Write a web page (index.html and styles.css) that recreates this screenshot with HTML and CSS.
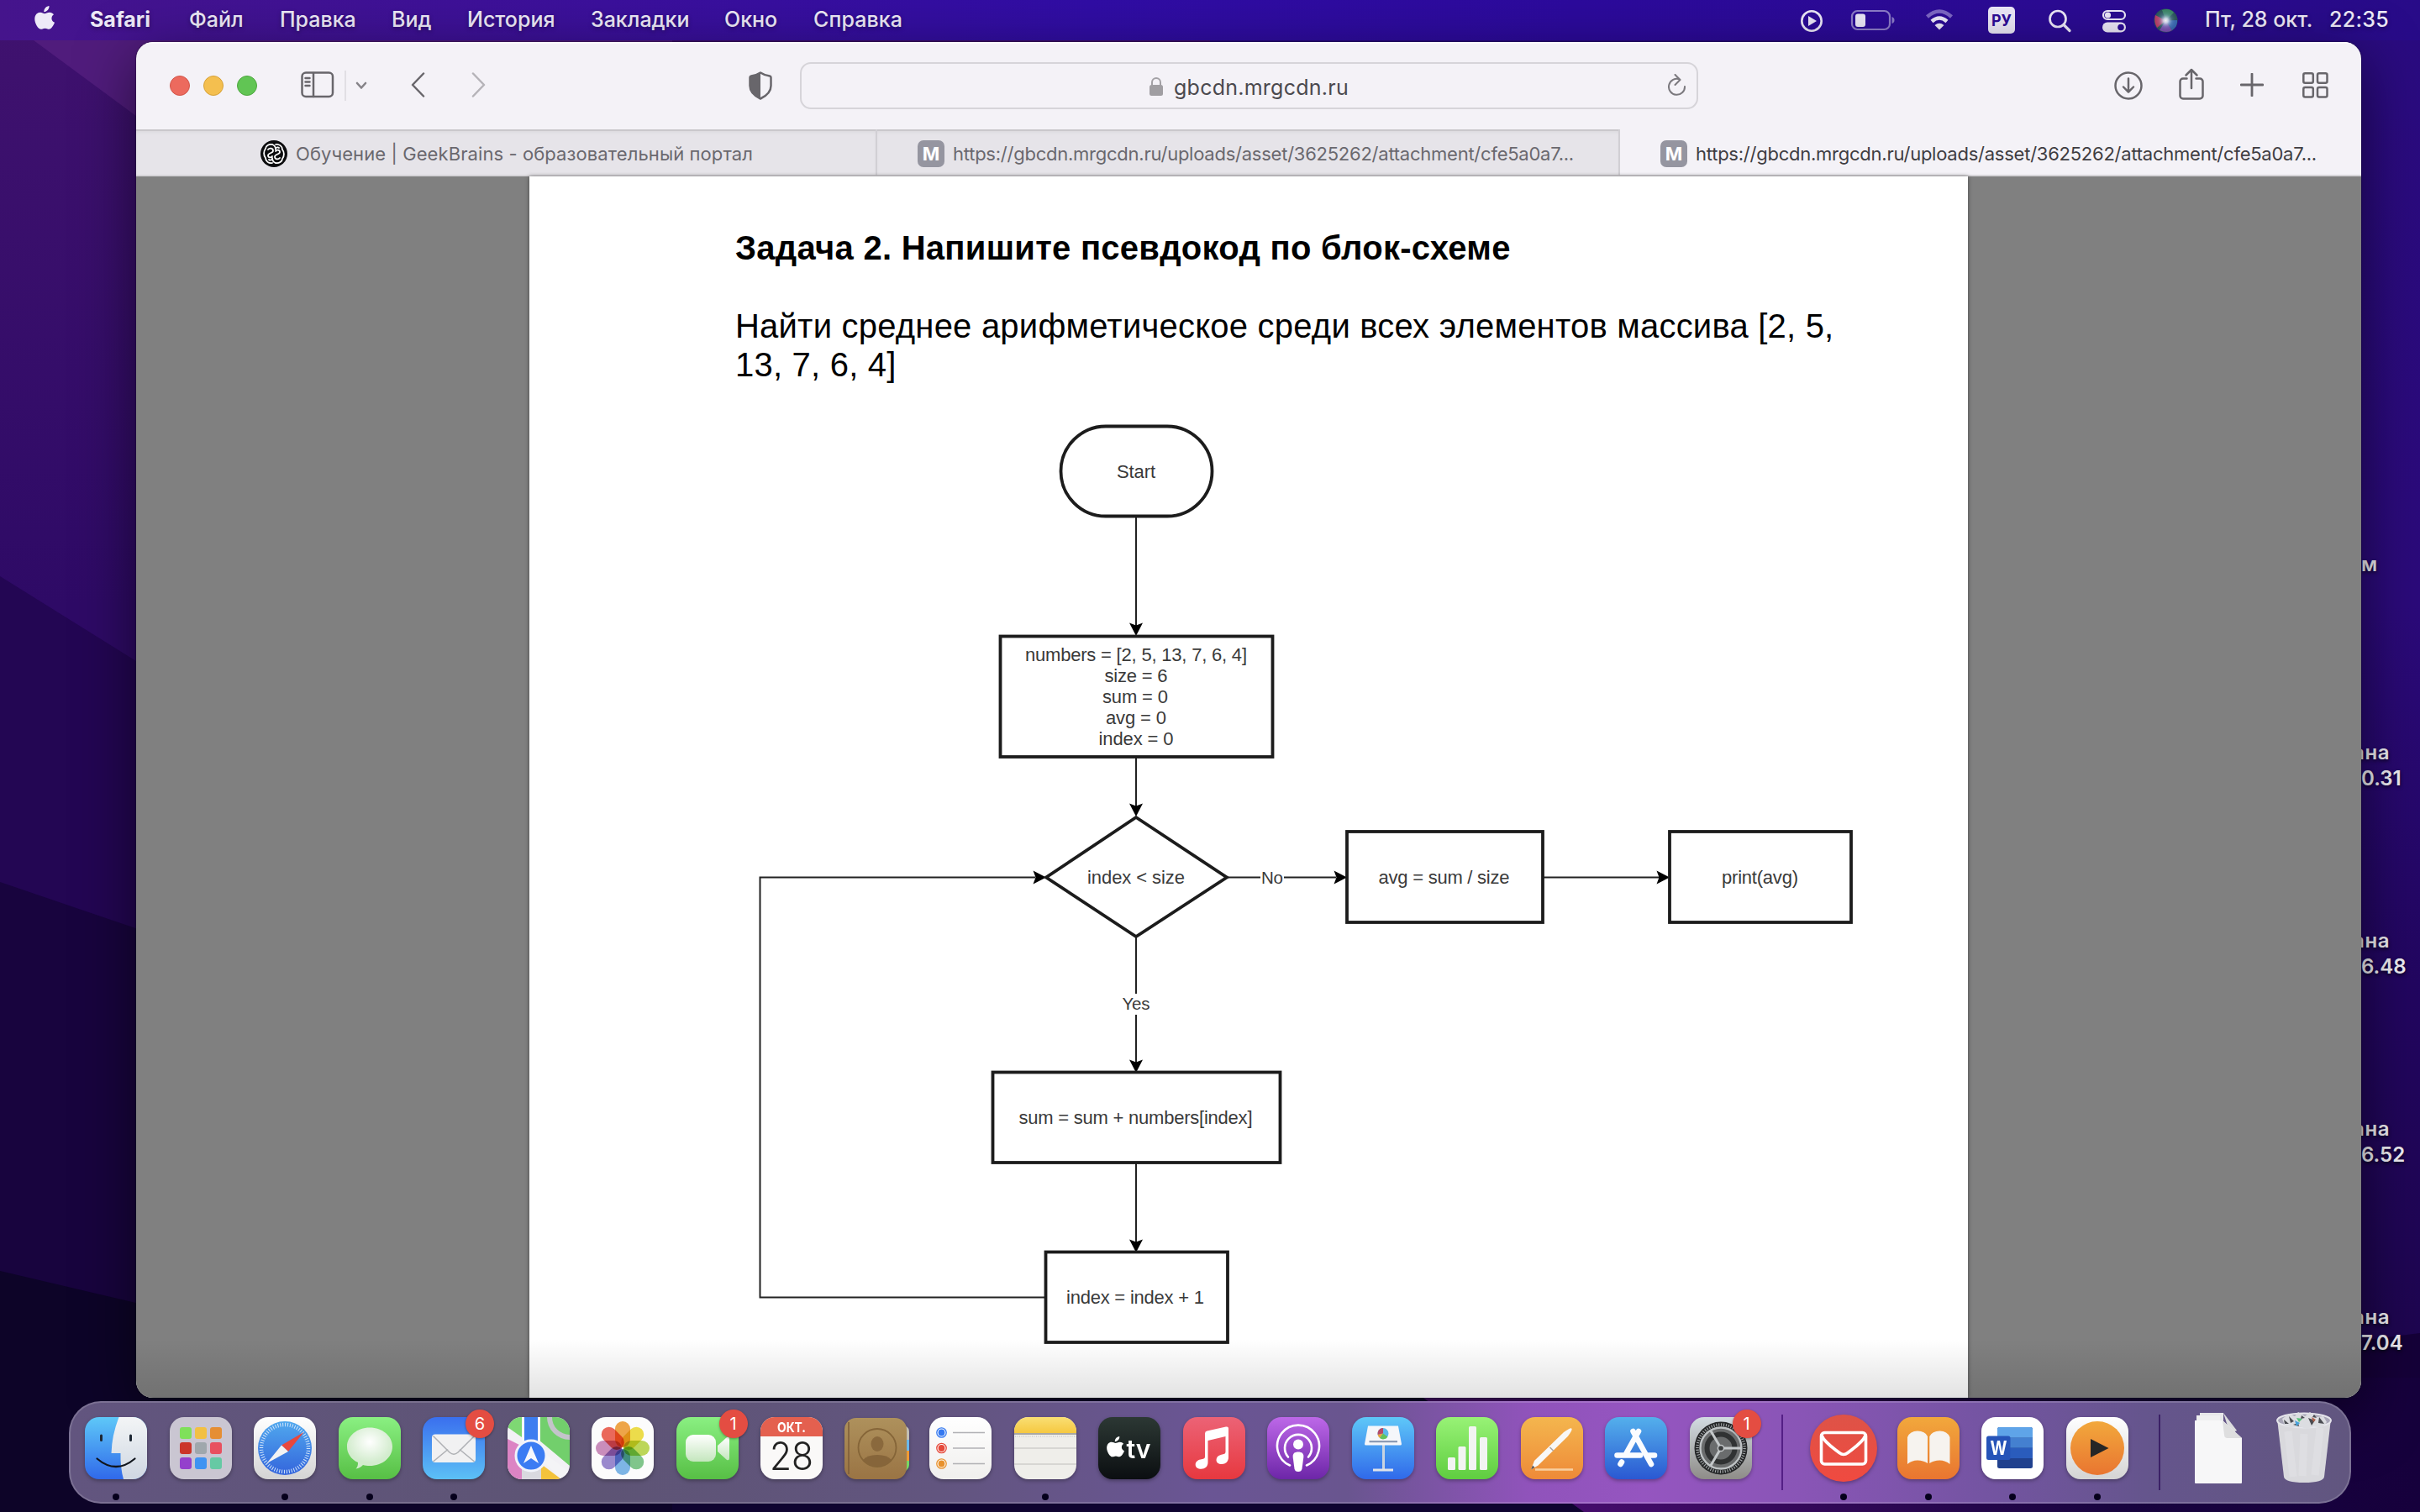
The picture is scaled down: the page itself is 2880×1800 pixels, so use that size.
FILE: index.html
```html
<!DOCTYPE html>
<html lang="ru">
<head>
<meta charset="utf-8">
<title>gbcdn.mrgcdn.ru</title>
<link rel="stylesheet" href="styles.css">
</head>
<body>
<svg class="wallpaper" viewBox="0 0 2880 1800" preserveAspectRatio="none" aria-hidden="true">
  <defs>
    <linearGradient id="wl" x1="0" y1="0" x2="0" y2="1"><stop offset="0" stop-color="#40126f"/><stop offset=".4" stop-color="#2e0a66"/></linearGradient>
    <linearGradient id="wr" x1="0" y1="0" x2="0" y2="1"><stop offset="0" stop-color="#2a0b80"/><stop offset=".4" stop-color="#2b0a7a"/><stop offset=".65" stop-color="#220660"/><stop offset=".88" stop-color="#1e0650"/></linearGradient>
    <linearGradient id="wb" x1="0" y1="0" x2="1" y2="0"><stop offset="0" stop-color="#521079"/><stop offset=".3" stop-color="#3c0a62"/><stop offset=".7" stop-color="#18043f"/><stop offset="1" stop-color="#16003c"/></linearGradient>
  </defs>
  <rect width="1440" height="1800" fill="url(#wl)"/>
  <rect x="1440" width="1440" height="1800" fill="url(#wr)"/>
  <path d="M0 0L40 48L170 144L800 600V0z" fill="#501c7c"/>
  <path d="M0 686L170 792L700 1100V1800H0z" fill="#230653"/>
  <path d="M0 1050L170 1108L900 1300V1800H0z" fill="#18043e"/>
  <path d="M0 1513L170 1553L1440 1700V1800H0z" fill="#0d0428"/>
  <path d="M800 1640H2880V1800H800z" fill="#0f0430"/>
  <path d="M2700 1610L2880 1587V1800H2700z" fill="#150038"/>
  <path d="M1660 1640L1885 1800H2880V1640z" fill="url(#wb)"/>
</svg>

<header class="menubar">
  <svg class="apple" viewBox="0 0 27 32"><path d="M18.500 1c.2 2-.6 3.800-1.700 5.100-1.200 1.300-2.900 2.200-4.500 2.100-.2-1.900.7-3.800 1.800-5C15.300 1.900 17.100 1.100 18.500 1zM24 11.200c-3.800 2.300-3.200 8 1 9.600-1 2.900-3.800 8-6.700 8-1.900 0-2.500-1.100-4.700-1.100s-2.900 1.100-4.600 1.100C5.500 28.900 1.300 21.900 1.300 16.700c0-5 3.200-7.900 6.500-7.900 2.200 0 4 1.400 5.300 1.400 1.200 0 3.400-1.500 6-1.500 1.900 0 3.700.9 4.900 2.500z"/></svg>
  <nav class="menus">
    <span class="m1">Safari</span><span class="m2">Файл</span><span class="m3">Правка</span><span class="m4">Вид</span><span class="m5">История</span><span class="m6">Закладки</span><span class="m7">Окно</span><span class="m8">Справка</span>
  </nav>
  <svg class="status" viewBox="2140 0 460 48">
    <circle cx="2156" cy="25" r="11.700" fill="none" stroke="#ece8f8" stroke-width="2.600"/><path d="M2152 19l10 6-10 6z" fill="#ece8f8"/>
    <rect x="2204" y="13" width="45" height="22" rx="6.500" fill="none" stroke="#8c7cc8" stroke-width="2.200"/><rect x="2208" y="16.500" width="12" height="15.500" rx="3" fill="#ece8f8"/><path d="M2251.500 20v8q3-1 3-4t-3-4z" fill="#8c7cc8"/>
    <path d="M2293.500 20q14.500-13 29 0" fill="none" stroke="#7d67c4" stroke-width="4.500"/><path d="M2299 25.500q9-8 18 0" fill="none" stroke="#ece8f8" stroke-width="4.500"/><path d="M2302.500 30q5.500-4.500 11 0l-5.500 5.500z" fill="#ece8f8"/>
    <rect x="2366" y="8" width="32" height="32" rx="5" fill="#ece8f8"/><text x="2382" y="31" class="lang" text-anchor="middle" textLength="24" lengthAdjust="spacingAndGlyphs">РУ</text>
    <circle cx="2449" cy="22.500" r="9.500" fill="none" stroke="#ece8f8" stroke-width="2.700"/><path d="M2456 29.500l7 7" stroke="#ece8f8" stroke-width="3.200" stroke-linecap="round"/>
    <rect x="2503" y="13" width="26" height="10" rx="5" fill="none" stroke="#ece8f8" stroke-width="2.200"/><circle cx="2508.500" cy="18" r="3.600" fill="#ece8f8"/><rect x="2502" y="26.500" width="28" height="12" rx="6" fill="#ece8f8"/><circle cx="2524" cy="32.500" r="3.800" fill="#2c0b96"/>
    <defs><radialGradient id="siri"><stop offset="0" stop-color="#fff"/><stop offset=".2" stop-color="#dfe6fa" stop-opacity=".9"/><stop offset=".55" stop-color="#7a9cc0" stop-opacity=".35"/><stop offset="1" stop-color="#22344f" stop-opacity=".1"/></radialGradient></defs>
    <circle cx="2577.500" cy="24.500" r="14" fill="#2c5a5c"/><path d="M2577.500 24.500L2565 18q-2 8 2 15z" fill="#d93a68"/><path d="M2577.500 24.500L2570 36q9 4 15 0z" fill="#8a4fc0"/><path d="M2577.500 24.500L2585 36q7-5 6-12z" fill="#3a6fc4"/><path d="M2577.500 24.500L2573 12q9-3 14 3z" fill="#3f9468"/><circle cx="2577.500" cy="24.500" r="14" fill="url(#siri)"/>
  </svg>
  <span class="date">Пт, 28 окт.</span><span class="time">22:35</span>
</header>

<aside class="desktop-labels">
  <p class="lbl first"><span>м</span></p>
  <p class="lbl"><span class="cut">ана</span><span>0.31</span></p>
  <p class="lbl"><span class="cut">ана</span><span>6.48</span></p>
  <p class="lbl"><span class="cut">ана</span><span>6.52</span></p>
  <p class="lbl"><span class="cut">ана</span><span>7.04</span></p>
</aside>

<main class="window">
  <div class="toolbar">
    <div class="lights"><i class="red"></i><i class="yellow"></i><i class="green"></i></div>
    <svg class="ic sidebar" viewBox="0 0 40 32"><rect x="1.500" y="1.500" width="36.500" height="28.500" rx="4.500"/><path d="M15 2v28M5.500 8h5M5.500 12.500h5M5.500 17h5"/></svg>
    <i class="vsep"></i>
    <svg class="ic chev" viewBox="0 0 14 10"><path d="M2 2l5 5.500L12 2" stroke-width="2.600"/></svg>
    <svg class="ic back" viewBox="0 0 17 30"><path d="M15 1.500L2 15l13 13.500"/></svg>
    <svg class="ic fwd" viewBox="0 0 17 30"><path d="M2 1.500L15 15 2 28.500"/></svg>
    <svg class="ic shield" viewBox="0 0 28 34"><path d="M14 1.500C17 3.500 21 5 25 5.500c1 .2 1.500.8 1.500 1.700V17c0 7-5 12-12.500 15.500C6.500 29 1.500 24 1.500 17V7.200c0-.9.500-1.500 1.500-1.700C7 5 11 3.500 14 1.500z"/><path d="M14 1.500C11 3.500 7 5 3 5.500c-1 .2-1.500.8-1.500 1.700V17c0 7 5 12 12.500 15.500z" class="solid"/></svg>
    <div class="url">
      <svg class="lock" viewBox="0 0 16 24"><path d="M3 11V7a5 5 0 0 1 10 0v4" fill="none" stroke="#a3a1a5" stroke-width="2"/><rect y="10" width="16" height="13" rx="2.500" fill="#a09ea2"/></svg>
      <span>gbcdn.mrgcdn.ru</span>
      <svg class="ic reload" viewBox="0 0 22 28"><path d="M20 15a9.500 9.500 0 1 1-6-8.500M8.500 1l6 6-6 6" stroke-width="2"/></svg>
    </div>
    <svg class="ic download" viewBox="0 0 34 34"><circle cx="17" cy="17" r="15.500"/><path d="M17 8.500v16M11 18.500l6 6.200 6-6.200"/></svg>
    <svg class="ic share" viewBox="0 0 30 38"><path d="M9.500 12.500H5a3.500 3.500 0 0 0-3.500 3.500v17A3.500 3.500 0 0 0 5 36.500h20a3.500 3.500 0 0 0 3.500-3.500V16a3.500 3.500 0 0 0-3.500-3.500h-4.500M15 24V2M8.500 8.500L15 2l6.500 6.500"/></svg>
    <svg class="ic plus" viewBox="0 0 28 28"><path d="M14 1v26M1 14h26" stroke-width="2.800"/></svg>
    <svg class="ic grid" viewBox="0 0 31 31"><rect x="1.300" y="1.300" width="11.500" height="11.500" rx="2"/><rect x="18" y="1.300" width="11.500" height="11.500" rx="2"/><rect x="1.300" y="18" width="11.500" height="11.500" rx="2"/><rect x="18" y="18" width="11.500" height="11.500" rx="2"/></svg>
  </div>
  <div class="tabs">
    <div class="tab t1"><svg class="gb" viewBox="0 0 32 32"><circle cx="16" cy="16" r="16" fill="#0c0c0e"/><g fill="none" stroke="#fff" stroke-width="1.800" stroke-linecap="round" stroke-linejoin="round"><path d="M14 5C10 4 6 7 6 10c-2.500 3-2.500 8 0 11 0 4 4 7 8 6M18 27c4 1 8-2 8-5 2.500-3 2.500-8 0-11 0-4-4-7-8-6"/><path d="M9 11c2-2.500 6-1.500 6 1.500S9 15 9 18s4 3 5 1M23 21c-2 2.500-6 1.500-6-1.500s6-2.500 6-5.500-4-3-5-1"/><path d="M14 5c3 1 4 3 4 6M18 27c-3-1-4-3-4-6M10 23c1 1 3 1 4-1M22 9c-1-1-3-1-4 1"/></g></svg><span>Обучение | GeekBrains - образовательный портал</span></div>
    <div class="tab t2"><b>M</b><span>https://gbcdn.mrgcdn.ru/uploads/asset/3625262/attachment/cfe5a0a7...</span></div>
    <div class="tab t3"><b>M</b><span>https://gbcdn.mrgcdn.ru/uploads/asset/3625262/attachment/cfe5a0a7...</span></div>
  </div>
  <div class="viewer">
    <article class="page">
      <h1>Задача 2. Напишите псевдокод по блок-схеме</h1>
      <p>Найти среднее арифметическое среди всех элементов массива [2, 5,<br>13, 7, 6, 4]</p>
      <svg class="flow" viewBox="630 480 1712 1184">
        <defs>
          <path id="head" d="M0 0l-8-15.500L0-12.500l8-3z"/>
        </defs>
        <g class="edge">
          <path d="M1352 614V745M1352 901V960M1352 1116V1183M1352 1208V1265M1352 1384V1479M1460 1044.500H1500M1528 1044.500H1590M1836 1044.500H1975M1244 1544.500H904.500V1044.500H1232"/>
        </g>
        <g class="arrow">
          <use href="#head" x="1352" y="757"/><use href="#head" x="1352" y="972"/><use href="#head" x="1352" y="1277"/><use href="#head" x="1352" y="1491"/>
          <use href="#head" transform="translate(1245 1044.500) rotate(-90)"/><use href="#head" transform="translate(1603 1044.500) rotate(-90)"/><use href="#head" transform="translate(1987 1044.500) rotate(-90)"/>
        </g>
        <g class="node">
          <rect x="1262.500" y="507.500" width="180" height="107" rx="53.500"/>
          <rect x="1190.500" y="757.500" width="324" height="143.500"/>
          <path d="M1352 973L1460 1044.500L1352 1115L1245 1044.500z"/>
          <rect x="1603" y="990" width="233" height="108"/>
          <rect x="1987" y="990" width="216" height="108"/>
          <rect x="1181.500" y="1276.500" width="342" height="107.500"/>
          <rect x="1244.500" y="1490.500" width="216.500" height="107.500"/>
        </g>
        <g class="label" transform="translate(0 -1)">
          <text x="1352" y="569.500" textLength="46">Start</text>
          <text x="1352" y="787.500" textLength="264">numbers = [2, 5, 13, 7, 6, 4]</text>
          <text x="1352" y="812.500" textLength="75">size = 6</text>
          <text x="1351" y="837.500" textLength="78">sum = 0</text>
          <text x="1352" y="862.500" textLength="72">avg = 0</text>
          <text x="1352" y="887.500" textLength="89">index = 0</text>
          <text x="1352" y="1052.500" textLength="116">index &lt; size</text>
          <text x="1514" y="1053" textLength="26" class="small">No</text>
          <text x="1718.500" y="1052.500" textLength="156">avg = sum / size</text>
          <text x="2094.500" y="1052.500" textLength="91">print(avg)</text>
          <text x="1352" y="1203" textLength="33" class="small">Yes</text>
          <text x="1351.500" y="1338.500" textLength="278">sum = sum + numbers[index]</text>
          <text x="1351" y="1553" textLength="164">index = index + 1</text>
        </g>
      </svg>
    </article>
  </div>
</main>

<footer class="dock">
  <svg width="0" height="0" class="defs"><defs>
    <linearGradient id="blue" x2="0" y2="1"><stop stop-color="#5ec8f8"/><stop offset="1" stop-color="#3069ea"/></linearGradient>
    <linearGradient id="mailg" x2="0" y2="1"><stop stop-color="#3a6fee"/><stop offset="1" stop-color="#5cc0f6"/></linearGradient>
    <linearGradient id="green" x2="0" y2="1"><stop stop-color="#8af082"/><stop offset="1" stop-color="#57bf45"/></linearGradient>
    <linearGradient id="white" x2="0" y2="1"><stop stop-color="#fff"/><stop offset="1" stop-color="#d4d4d4"/></linearGradient>
    <linearGradient id="soft" x2="0" y2="1"><stop stop-color="#fff"/><stop offset="1" stop-color="#f0efed"/></linearGradient>
    <linearGradient id="pale" x2="0" y2="1"><stop stop-color="#f3f5f6"/><stop offset="1" stop-color="#cfd7e2"/></linearGradient>
    <linearGradient id="comp" x2="0" y2="1"><stop stop-color="#50a8ee"/><stop offset="1" stop-color="#3465dc"/></linearGradient>
    <linearGradient id="gold" x2="0" y2="1"><stop stop-color="#ae915c"/><stop offset="1" stop-color="#9a7444"/></linearGradient>
    <linearGradient id="yel" x2="0" y2="1"><stop stop-color="#f9df74"/><stop offset="1" stop-color="#f6c840"/></linearGradient>
    <linearGradient id="tvg" x2="0" y2="1"><stop stop-color="#2c3834"/><stop offset="1" stop-color="#0b0e11"/></linearGradient>
    <linearGradient id="mus" x2="0" y2="1"><stop stop-color="#ec6376"/><stop offset="1" stop-color="#e7383f"/></linearGradient>
    <linearGradient id="pod" x2="0" y2="1"><stop stop-color="#bd68e8"/><stop offset="1" stop-color="#6d26a8"/></linearGradient>
    <linearGradient id="num" x2="0" y2="1"><stop stop-color="#98f276"/><stop offset="1" stop-color="#5fcd40"/></linearGradient>
    <linearGradient id="ora" x2="0" y2="1"><stop stop-color="#f4b64e"/><stop offset="1" stop-color="#ee8a38"/></linearGradient>
    <linearGradient id="bok" x2="0" y2="1"><stop stop-color="#f2a83c"/><stop offset="1" stop-color="#e97530"/></linearGradient>
    <linearGradient id="app" x2="0" y2="1"><stop stop-color="#54b0ec"/><stop offset="1" stop-color="#2a58d2"/></linearGradient>
    <linearGradient id="sys" x2="0" y2="1"><stop stop-color="#d3dce2"/><stop offset="1" stop-color="#8e8c88"/></linearGradient>
    <linearGradient id="red" x2="0" y2="1"><stop stop-color="#de5347"/><stop offset="1" stop-color="#f04a40"/></linearGradient>
    <linearGradient id="cam" x2="0" y2="1"><stop stop-color="#fff"/><stop offset="1" stop-color="#c4e6bd"/></linearGradient>
    <radialGradient id="ball" cy=".35"><stop stop-color="#fff"/><stop offset="1" stop-color="#d3ecce"/></radialGradient>
    <clipPath id="sq"><rect width="74" height="74" rx="17"/></clipPath>
  </defs></svg>

  <div class="app on"><svg viewBox="0 0 74 74"><g clip-path="url(#sq)"><rect width="74" height="74" fill="url(#blue)"/><path d="M40.500 0Q32 22 31.500 43H42.500Q42 60 46 74H74V0z" fill="url(#pale)"/></g><path d="M19.500 22v5.500M54.500 22v5.500" stroke="#1d2733" stroke-width="3" stroke-linecap="round"/><path d="M14.500 49.500Q37 68.500 59.500 49.500" fill="none" stroke="#10151c" stroke-width="2.200" stroke-linecap="round"/></svg></div>
  <div class="app"><svg viewBox="0 0 74 74"><rect width="74" height="74" rx="17" fill="#cac6d2"/><g><rect x="12" y="12" width="14" height="14" rx="3" fill="#7fe05a"/><rect x="30" y="12" width="14" height="14" rx="3" fill="#f2c043"/><rect x="48" y="12" width="14" height="14" rx="3" fill="#e58e34"/><rect x="12" y="30" width="14" height="14" rx="3" fill="#cb3529"/><rect x="30" y="30" width="14" height="14" rx="3" fill="#9fa7ac"/><rect x="48" y="30" width="14" height="14" rx="3" fill="#e8505f"/><rect x="12" y="48" width="14" height="14" rx="3" fill="#9440cc"/><rect x="30" y="48" width="14" height="14" rx="3" fill="#3f93f2"/><rect x="48" y="48" width="14" height="14" rx="3" fill="#66c9a4"/></g></svg></div>
  <div class="app on"><svg viewBox="0 0 74 74"><rect width="74" height="74" rx="17" fill="url(#white)"/><circle cx="37" cy="37" r="32" fill="url(#comp)"/><circle cx="37" cy="37" r="28" fill="none" stroke="#cfe4fa" stroke-width="4.500" stroke-dasharray="1 1.930"/><path d="M59.500 18L41 41 33 33.500z" fill="#e8473c"/><path d="M15.500 55L33 33.500 41 41z" fill="#f3f3f3"/></svg></div>
  <div class="app on"><svg viewBox="0 0 74 74"><rect width="74" height="74" rx="17" fill="url(#green)"/><path d="M37 12.500c15 0 27 10 27 22.700S52 58 37 58c-3 0-5.500-.4-8-1-2.500 2.500-5 4-8.500 4.500 2-2 2.600-4.500 2.500-7.500C14.500 50 10 43 10 35.200 10 22.500 22 12.500 37 12.500z" fill="url(#ball)"/></svg></div>
  <div class="app on"><svg viewBox="0 0 74 74"><rect width="74" height="74" rx="17" fill="url(#mailg)"/><rect x="11" y="20.500" width="52" height="33.500" rx="4" fill="#f1f1f2"/><path d="M12.500 22.500L32 42q5 4.500 10 0L61.500 22.500M12.500 53L30 38.500M61.500 53L44 38.500" fill="none" stroke="#aeb0b4" stroke-width="1.500"/></svg><em>6</em></div>
  <div class="app"><svg viewBox="0 0 74 74"><g clip-path="url(#sq)"><rect width="74" height="74" fill="#f2f1f5"/><path d="M0 0H17V24L0 12z" fill="#7ed873"/><path d="M37 0H74V58L37 27z" fill="#72cf6c"/><path d="M0 26L20 36V74H0z" fill="#dc84c4"/><path d="M40 56L64 74H40z" fill="#f3c33c"/><path d="M64 74L40 50V40L74 66V74z" fill="#f4f4f6"/><path d="M17 74V50H40V74z" fill="#d9d9df"/><rect x="17" width="22" height="50" fill="#f6f6fa"/><rect x="20" width="16" height="50" fill="#3d7df0"/><circle cx="74" cy="0" r="24" fill="none" stroke="#c3c4ca" stroke-width="6"/></g><circle cx="28" cy="46" r="18" fill="#3b7cf3" stroke="#f1f3fa" stroke-width="3"/><path d="M28 34l9 21-9-6-9 6z" fill="#f6f8fc"/></svg></div>
  <div class="app"><svg viewBox="0 0 74 74"><rect width="74" height="74" rx="17" fill="#fcfcfc"/><g class="petals"><rect x="28" y="5" width="18" height="31" rx="9" fill="#f0a03c"/><rect x="28" y="5" width="18" height="31" rx="9" fill="#eedd3e" transform="rotate(45 37 37)"/><rect x="28" y="5" width="18" height="31" rx="9" fill="#b9d64c" transform="rotate(90 37 37)"/><rect x="28" y="5" width="18" height="31" rx="9" fill="#78c484" transform="rotate(135 37 37)"/><rect x="28" y="5" width="18" height="31" rx="9" fill="#76b2e6" transform="rotate(180 37 37)"/><rect x="28" y="5" width="18" height="31" rx="9" fill="#9582cc" transform="rotate(225 37 37)"/><rect x="28" y="5" width="18" height="31" rx="9" fill="#c886b8" transform="rotate(270 37 37)"/><rect x="28" y="5" width="18" height="31" rx="9" fill="#ec5f50" transform="rotate(315 37 37)"/></g></svg></div>
  <div class="app"><svg viewBox="0 0 74 74"><rect width="74" height="74" rx="17" fill="url(#green)"/><rect x="11" y="21" width="36" height="32" rx="9" fill="url(#cam)"/><path d="M49 34L60 24q3-1 3 2v23q0 3-3 2L49 41z" fill="url(#cam)"/></svg><em>1</em></div>
  <div class="app"><svg viewBox="0 0 74 74"><rect width="74" height="74" rx="17" fill="#faf9f8"/><path d="M0 23V17A17 17 0 0 1 17 0H57A17 17 0 0 1 74 17V23z" fill="#e4604f"/><text x="37" y="17.500" class="oct" textLength="34" lengthAdjust="spacingAndGlyphs">ОКТ.</text><text x="37" y="62.500" class="day" textLength="52" lengthAdjust="spacingAndGlyphs">28</text></svg></div>
  <div class="app"><svg viewBox="0 0 74 74"><path d="M66 10q10 0 10 7v10H66z" fill="#c3bfb4"/><rect x="60" y="27" width="16" height="13" fill="#6bb9ea"/><rect x="60" y="40" width="16" height="12" fill="#f09a34"/><path d="M60 52H76v5q0 6-10 10z" fill="#79d862"/><rect x="-1" y="1" width="74" height="73" rx="14" fill="url(#gold)"/><path d="M4 6v62" stroke="#7d5d38" stroke-width="1.500"/><circle cx="38" cy="36.500" r="22.500" fill="none" stroke="#856538" stroke-width="1.800"/><ellipse cx="38" cy="32" rx="7.500" ry="9" fill="#8a693d"/><path d="M21 51q5-6 17-6t17 6q-7 8-17 8t-17-8z" fill="#86653a"/></svg></div>
  <div class="app"><svg viewBox="0 0 74 74"><rect width="74" height="74" rx="17" fill="url(#soft)"/><g stroke-width="1.300"><circle cx="14.500" cy="18.500" r="5.700" fill="#fff" stroke="#3478f0"/><circle cx="14.500" cy="18.500" r="3.900" fill="#3478f0"/><circle cx="14.500" cy="37" r="5.700" fill="#fff" stroke="#e5493a"/><circle cx="14.500" cy="37" r="3.900" fill="#e5493a"/><circle cx="14.500" cy="55.500" r="5.700" fill="#fff" stroke="#e8912c"/><circle cx="14.500" cy="55.500" r="3.900" fill="#e8912c"/></g><path d="M28 18.500H66M28 37H66M28 55.500H66" stroke="#b1b1b5" stroke-width="1.400"/></svg></div>
  <div class="app on"><svg viewBox="0 0 74 74"><g clip-path="url(#sq)"><rect width="74" height="74" fill="#efeeea"/><rect width="74" height="19" fill="url(#yel)"/><path d="M0 20H74" stroke="#a9a8a4" stroke-width="1.800"/><path d="M1 23H74" stroke="#bbb" stroke-width="1" stroke-dasharray="1 1.500"/><path d="M0 37H74M0 56H74" stroke="#cfcecb" stroke-width="1.300"/></g></svg></div>
  <div class="app"><svg viewBox="0 0 74 74"><rect width="74" height="74" rx="17" fill="url(#tvg)"/><path transform="translate(9 22) scale(.88)" fill="#fff" d="M18.500 1c.2 2-.6 3.800-1.700 5.100-1.200 1.300-2.900 2.200-4.500 2.100-.2-1.900.7-3.800 1.800-5C15.300 1.900 17.100 1.100 18.500 1zM24 11.200c-3.800 2.300-3.200 8 1 9.600-1 2.900-3.800 8-6.700 8-1.900 0-2.500-1.100-4.700-1.100s-2.900 1.100-4.600 1.100C5.500 28.900 1.300 21.900 1.300 16.700c0-5 3.200-7.900 6.500-7.900 2.200 0 4 1.400 5.300 1.400 1.200 0 3.400-1.500 6-1.500 1.900 0 3.700.9 4.900 2.500z"/><text x="48" y="48.500" class="tv" textLength="29" lengthAdjust="spacingAndGlyphs">tv</text></svg></div>
  <div class="app"><svg viewBox="0 0 74 74"><rect width="74" height="74" rx="17" fill="url(#mus)"/><path d="M26 19.500q0-2.500 2.500-3L51 11.500q3-.6 3 2V48c0 5-3.500 8-8 8-4 0-6.500-2-6.500-5s2-5.500 6-6.300l3-.6q2-.4 2-2.600V23L29.500 28v26c0 5-3.500 7.700-8 7.700-4 0-6.800-2-6.800-5s2.300-5.500 6-6.200l3.300-.7q2-.4 2-2.600z" fill="#fff"/></svg></div>
  <div class="app"><svg viewBox="0 0 74 74"><rect width="74" height="74" rx="17" fill="url(#pod)"/><g fill="none" stroke="#fff" stroke-width="2.600" stroke-linecap="round"><path d="M27 57.500A25 25 0 1 1 47 57.500"/><path d="M25 47.500A16 16 0 1 1 49 47.500"/></g><circle cx="37" cy="32.500" r="6" fill="#fff"/><path d="M37 41.500c4.500 0 6.800 2 6.300 6.500l-1.800 13.500q-.6 3.500-4.500 3.500t-4.500-3.500L30.700 48c-.5-4.500 1.800-6.500 6.300-6.500z" fill="#fff"/></svg></div>
  <div class="app"><svg viewBox="0 0 74 74"><rect width="74" height="74" rx="17" fill="url(#blue)"/><path d="M36 32h3v30h-3z" fill="#c9d4e0"/><path d="M25 61.500h24v3H25z" fill="#dfe3ea"/><path d="M19 10.500H55L59 32q0 1.500-1.500 1.500h-41Q15 33.500 15 32z" fill="#f5f7fa"/><path d="M20.500 28H54v2.300H20.500z" fill="#8d9cb4"/><circle cx="37" cy="19.500" r="6.500" fill="#5db8ea"/><path d="M37 19.500V13a6.500 6.500 0 0 0-6.400 8z" fill="#b64a68"/><path d="M37 19.500l-6.400 1.500a6.500 6.500 0 0 0 2.500 4z" fill="#eda53c"/><path d="M37 19.500L33 25a6.500 6.500 0 0 0 9.500-1.500z" fill="#63c25c"/></svg></div>
  <div class="app"><svg viewBox="0 0 74 74"><rect width="74" height="74" rx="17" fill="url(#num)"/><g fill="#f2f4f2"><rect x="14" y="48" width="9" height="15" rx="1.500"/><rect x="26.500" y="35" width="9" height="28" rx="1.500"/><rect x="39" y="11" width="9" height="52" rx="1.500"/><rect x="52" y="24" width="9" height="39" rx="1.500"/></g></svg></div>
  <div class="app"><svg viewBox="0 0 74 74"><rect width="74" height="74" rx="17" fill="url(#ora)"/><path d="M17 62.500H62" stroke="#f8cfa0" stroke-width="2.500"/><path d="M12 62.500L16 52 51 18q8.500-6 9.500-4.300t-4.500 9L20.500 57.500z" fill="#f8f7f6"/><path d="M34.500 36l4 4" stroke="#aaa3a0" stroke-width="1.600"/><path d="M12 62.500l2-5 2.500 2.500z" fill="#5c5550"/></svg></div>
  <div class="app"><svg viewBox="0 0 74 74"><rect width="74" height="74" rx="17" fill="url(#app)"/><g stroke="#fafcff" stroke-width="6.600" stroke-linecap="round"><path d="M40 17L25.500 43M33.500 17L55 56M14.500 45.500H42M51 45.500H59M20 53.500L18.500 56"/></g></svg></div>
  <div class="app"><svg viewBox="0 0 74 74"><rect width="74" height="74" rx="17" fill="url(#sys)"/><circle cx="37" cy="37" r="31.500" fill="#252728"/><circle cx="37" cy="37" r="28" fill="none" stroke="#a5a9ab" stroke-width="3.500" stroke-dasharray="1.100 1.830"/><circle cx="37" cy="37" r="24.500" fill="#6a6c6d" stroke="#bec2c4" stroke-width="2.400"/><circle cx="37" cy="37" r="16.500" fill="none" stroke="#303233" stroke-width="6"/><path d="M37 37H61M37 37L25 16.500M37 37L25 57.500" stroke="#c4c8ca" stroke-width="3"/><circle cx="37" cy="37" r="3.600" fill="#3b3d3e" stroke="#c4c8ca" stroke-width="1.500"/></svg><em>1</em></div>
  <i class="dsep"></i>
  <div class="app big on"><svg viewBox="0 0 80 80"><circle cx="40" cy="40" r="40" fill="url(#red)"/><rect x="13.500" y="21.500" width="53" height="37.500" rx="4" fill="none" stroke="#fff" stroke-width="3.600"/><path d="M14 25C17 33 28 40 35 45.500q5 4 10 0C52 40 63 33 66 25" fill="none" stroke="#fff" stroke-width="3.600"/></svg></div>
  <div class="app on"><svg viewBox="0 0 74 74"><rect width="74" height="74" rx="17" fill="url(#bok)"/><path d="M12 24q3-7.500 12-7.500T36 23V55q-5-3.500-12-3.500T12 56zM62.500 24q-3-7.500-12-7.500T38.300 23V55q5-3.500 12-3.500T62.500 56z" fill="#f6f3ef"/></svg></div>
  <div class="app on"><svg viewBox="0 0 74 74"><rect width="74" height="74" rx="17" fill="#fff"/><rect x="19" y="12" width="42" height="49" rx="2.500" fill="#20418e"/><path d="M19 49H61V36.500H19z" fill="#2a5cbc"/><path d="M19 36.500H61V24.500H19z" fill="#4480d0"/><path d="M19 24.500H61V14.500Q61 12 58.500 12H21.500Q19 12 19 14.500z" fill="#5fa4e8"/><rect x="6" y="22.500" width="28.500" height="28.500" rx="2.500" fill="#2654b8"/><text x="20.500" y="44.500" class="word" textLength="20" lengthAdjust="spacingAndGlyphs">W</text></svg></div>
  <div class="app on"><svg viewBox="0 0 74 74"><rect width="74" height="74" rx="17" fill="url(#white)"/><circle cx="37" cy="37" r="32" fill="url(#bok)"/><path d="M29 26L50.500 37 29 48z" fill="#262626"/></svg></div>
  <i class="dsep second"></i>
  <svg class="doc" viewBox="0 0 56 86"><path d="M6 1H34V12H6z" fill="#e7e7e9"/><path d="M2 4H30V14H2z" fill="#efeff0"/><path d="M34 1L50 22l-8 4z" fill="#dcdcde"/><path d="M0 10H33L56 31V84q0 1-1 1H1q-1 0-1-1z" fill="#f7f7f8"/><path d="M33 10L56 31H39q-4 0-4-4z" fill="#dededf"/></svg>
  <svg class="trash" viewBox="0 0 66 86"><path d="M1 9L9 78q1 7 24 7t24-7L65 9z" fill="#d9d9dd"/><path d="M14 24l6 54M33 27l-2 50M52 20l-6 56" stroke="#e4e4e7" stroke-width="9" opacity=".5"/><ellipse cx="33" cy="11" rx="32" ry="8.500" fill="#a9a7b8" stroke="#e6e6ec" stroke-width="2"/><path d="M7 9L15 3l7 3 4-5 8 5 6-5 7 6 9-1 4 7-6 7-9-2-9 3-9-3-9 2-8-3z" fill="#dcdde1"/><path d="M15 6l6 6-4 2zM38 8l8 3-4 6zM51 7l6 8-7-1zM9 10l6 5-5 0zM30 5l4 3-5 1zM20 16l6-2 1 4zM45 4l3 4-5-1z" fill="#4a4c52"/><path d="M24 8l7 1-4 4z" fill="#58c27a"/><path d="M22 11l6 3-4 4z" fill="#47a3dc"/><path d="M42 7l5 3-3 3z" fill="#b06048"/></svg>
</footer>
</body>
</html>
```
FILE: styles.css
```css
* { box-sizing: border-box; }
body {
  margin: 0;
  width: 2880px;
  height: 1800px;
  overflow: hidden;
  position: relative;
  background: #1a0548;
  font-family: Inter, "Noto Sans", sans-serif;
}
p, h1 { margin: 0; }
span, text { white-space: pre; }

.wallpaper { position: absolute; inset: 0; width: 2880px; height: 1800px; }

/* Menu bar */
.menubar {
  position: relative;
  height: 48px;
  padding-left: 40px;
  display: flex;
  align-items: center;
  background: linear-gradient(90deg, #45148c 0, #3b109b 25%, #300da4 45%, #2c0a9c 65%, #2b0b93 85%, #280b88 100%);
  color: #eeeaf8;
  font-size: 25px;
  line-height: 46px;
  font-weight: 500;
  text-shadow: 0 2px 5px rgba(0, 0, 0, .35);
}
.menubar span { height: 48px; }
.apple { width: 27px; height: 34px; fill: #eeeaf8; margin-top: -5px; }
.menus { display: flex; margin-left: 40px; width: 1100px; }
.m1 { width: 118px; font-weight: 700; }
.m2 { width: 108px; }
.m3 { width: 133px; }
.m4 { width: 90px; }
.m5 { width: 147px; }
.m6 { width: 159px; }
.m7 { width: 106px; }
.m8 { letter-spacing: .1px; }
.status { width: 460px; height: 48px; margin-left: 933px; }
.lang { font-size: 19px; font-weight: 700; fill: #2c0b96; text-shadow: none; }
.date { margin-left: 24px; width: 148px; }
.time { letter-spacing: .3px; }

/* Labels of desktop files, partly behind the window */
.desktop-labels {
  position: absolute;
  left: 2810px;
  top: 656px;
  width: 70px;
  color: #f0eff4;
  font-size: 24px;
  line-height: 31px;
  font-weight: 600;
  text-shadow: 0 2px 4px rgba(0, 0, 0, .7);
}
.lbl { height: 224px; display: flex; flex-direction: column; }
.cut { margin-left: -10px; letter-spacing: .6px; }

/* Browser window */
.window {
  position: absolute;
  left: 162px;
  top: 50px;
  width: 2648px;
  height: 1614px;
  border-radius: 20px;
  overflow: hidden;
  background: #f4f2f7;
  display: flex;
  flex-direction: column;
  box-shadow: 0 20px 70px rgba(0, 0, 0, .55), 0 0 2px rgba(0, 0, 0, .6);
}
.toolbar { height: 104px; padding-left: 40px; display: flex; align-items: center; box-shadow: inset 0 2px #fbfafc; }
.lights { display: flex; gap: 16px; }
.lights i { width: 24px; height: 24px; border-radius: 50%; }
.red { background: #ec6a5e; border: 1px solid #d25549; }
.yellow { background: #f4bf4f; border: 1px solid #d6a13a; }
.green { background: #61c554; border: 1px solid #4da73f; }
.ic { fill: none; stroke: #68666b; stroke-width: 2.5; stroke-linecap: round; stroke-linejoin: round; flex: none; }
.ic .solid { fill: #68666b; stroke: none; }
.sidebar { width: 40px; height: 32px; margin-left: 52px; margin-top: -2px; }
.vsep { width: 2px; height: 36px; margin-left: 12px; background: #e1dfe4; }
.chev { width: 14px; height: 10px; margin-left: 11px; stroke: #858388; }
.back { width: 17px; height: 30px; margin-left: 52px; margin-top: -2px; }
.fwd { width: 17px; height: 30px; margin-left: 55px; margin-top: -2px; stroke: #b5b3b8; }
.shield { width: 28px; height: 34px; margin-left: 313px; margin-top: -1px; }
.url {
  width: 1069px;
  height: 56px;
  margin-left: 33px;
  padding-right: 12px;
  border: 2px solid #d6d4d9;
  border-radius: 13px;
  display: flex;
  align-items: center;
  font-size: 25px;
  letter-spacing: .25px;
  color: #4b494e;
}
.lock { width: 16px; height: 24px; margin-left: 414px; margin-top: 2px; }
.url span { margin-left: 13px; flex: 1; padding-top: 3px; }
.reload { width: 22px; height: 28px; stroke: #7b797e; }
.download { width: 34px; height: 34px; margin-left: 495px; margin-top: -1px; }
.share { width: 30px; height: 38px; margin-left: 43px; margin-top: -5px; }
.plus { width: 28px; height: 28px; margin-left: 43px; margin-top: -3px; }
.grid { width: 31px; height: 31px; margin-left: 46px; margin-top: -2px; }

.tabs { display: flex; height: 56px; }
.tab {
  display: flex;
  align-items: center;
  padding-top: 4px;
  font-size: 22px;
  color: #6a686e;
  background: #e6e4e9;
  border-right: 2px solid #d1cfd4;
  border-bottom: 2px solid #d6d4d8;
  box-shadow: inset 0 2px #c9c7cb, inset 0 5px 4px -2px #d8d6da;
}
.t1 { width: 882px; padding-left: 148px; letter-spacing: .09px; }
.t2 { width: 884px; padding-left: 48px; letter-spacing: -.245px; }
.t3 { width: 882px; padding-left: 48px; letter-spacing: -.245px; background: #f4f2f7; color: #3f3d42; border-right: 0; box-shadow: none; }
.tab b {
  width: 32px;
  height: 32px;
  border-radius: 7px;
  background: #9595a0;
  color: #fff;
  font-size: 22px;
  line-height: 32px;
  text-align: center;
}
.gb { width: 32px; height: 32px; }
.tab span { margin-left: 10px; }

.viewer {
  flex: 1;
  position: relative;
  padding-left: 468px;
  background: #808080;
}
.viewer::after {
  content: "";
  position: absolute;
  inset: auto 0 0 0;
  height: 70px;
  background: linear-gradient(rgba(0, 0, 0, 0), rgba(0, 0, 0, .115));
}
.page { width: 1712px; height: 1454px; background: #fff; box-shadow: 0 0 5px rgba(0, 0, 0, .45); overflow: hidden; font-family: "Liberation Sans", Arial, sans-serif; color: #000; }
.page h1 { margin: 62px 0 0 245px; font-size: 40px; line-height: 46px; letter-spacing: .27px; }
.page p { margin: 47px 0 0 245px; font-size: 40px; line-height: 46px; letter-spacing: .215px; white-space: nowrap; }
.flow { display: block; width: 1712px; height: 1184px; margin-top: 23px; }
.edge path { fill: none; stroke: #222; stroke-width: 2; }
.arrow { fill: #000; }
.node { fill: none; stroke: #1c1c1c; stroke-width: 3.8; }
.label { font-size: 22px; fill: #3a3a3a; text-anchor: middle; }
.small { font-size: 20.500px; }

/* Dock */
.dock {
  position: absolute;
  left: 82px;
  top: 1668px;
  width: 2716px;
  height: 122px;
  padding-left: 4px;
  border: 2px solid rgba(255, 255, 255, .17);
  border-radius: 38px;
  display: flex;
  align-items: flex-start;
  background: linear-gradient(90deg, #62557f 0, #5d5474 22%, #62557f 38%, #6a5594 50%, #69558f 56%, #9053bb 64%, #9555c0 69%, #8955b6 76%, #7454a2 84%, #65558d 91%, #61567f 100%);
}
.defs { position: absolute; }
.app { position: relative; width: 100.500px; height: 118px; flex: none; display: flex; justify-content: center; padding-top: 17px; }
.app > svg { width: 74px; height: 74px; overflow: visible; filter: drop-shadow(0 2px 2px rgba(0, 0, 0, .3)); }
.big { padding-top: 14px; }
.big > svg { width: 80px; height: 80px; }
.on::after { content: ""; position: absolute; left: 46px; top: 108px; width: 8px; height: 8px; border-radius: 50%; background: #06001c; }
.app em {
  position: absolute;
  left: 64px;
  top: 8px;
  width: 34px;
  height: 34px;
  border-radius: 50%;
  background: #e44d42;
  color: #fff;
  font-size: 20px;
  font-style: normal;
  line-height: 34px;
  text-align: center;
  box-shadow: 0 1px 3px rgba(0, 0, 0, .35);
}
.dsep { width: 2px; height: 90px; margin: 14px 22px 0 22px; background: #541f86; flex: none; }
.dsep.second { margin: 14px 0 0 23px; background: #3b2166; }
.doc { width: 56px; height: 86px; margin: 11px 0 0 41px; }
.trash { width: 66px; height: 86px; margin: 10px 0 0 41px; overflow: visible; }
.petals rect { mix-blend-mode: multiply; fill-opacity: .93; }
.oct { font-size: 16px; font-weight: 700; fill: #fff; text-anchor: middle; }
.day { font-size: 46px; font-weight: 300; fill: #222; text-anchor: middle; }
.tv { font-size: 31px; font-weight: 600; fill: #fff; text-anchor: middle; }
.word { font-size: 23px; font-weight: 700; fill: #fff; text-anchor: middle; }
```
